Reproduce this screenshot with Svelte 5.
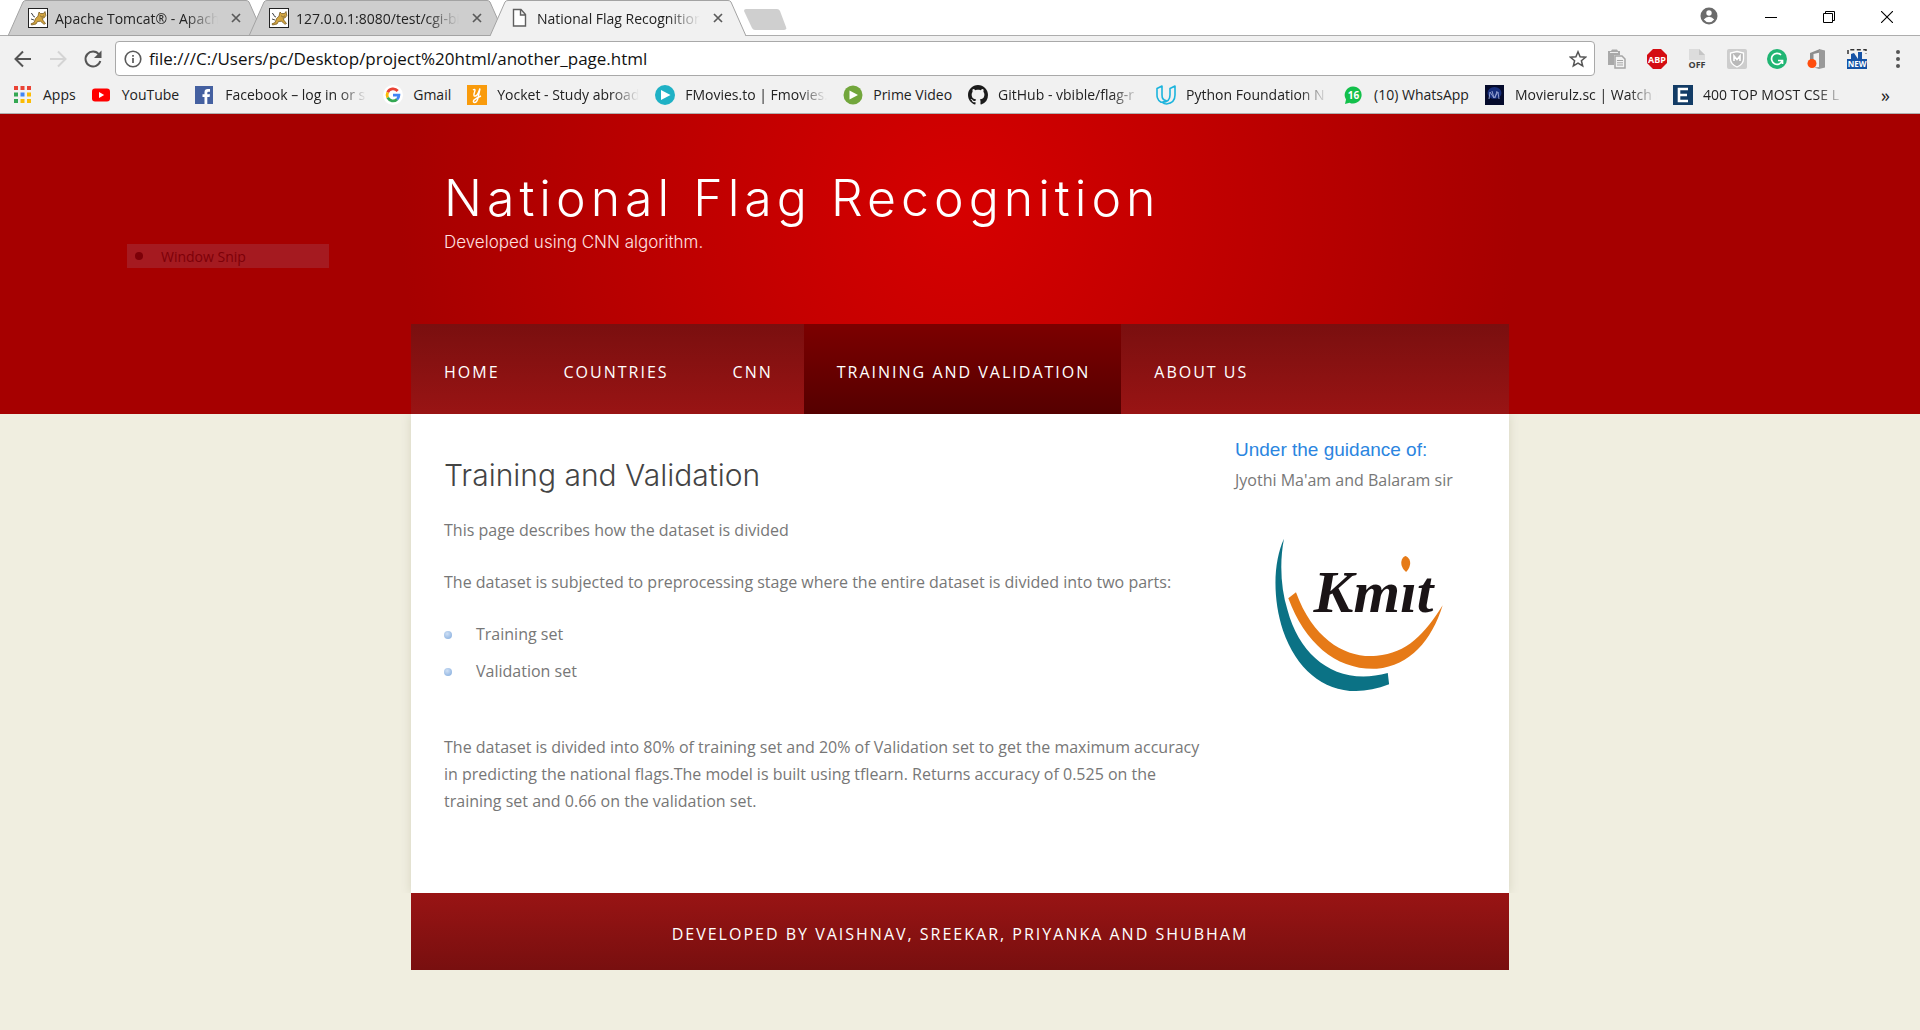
<script>
  const tabs = [
    { title: 'Apache Tomcat® - Apache', icon: 'cat', active: false },
    { title: '127.0.0.1:8080/test/cgi-bin', icon: 'cat', active: false },
    { title: 'National Flag Recognition', icon: 'page', active: true }
  ];
  const bookmarks = [
    { label: 'Apps', icon: 'apps' },
    { label: 'YouTube', icon: 'youtube' },
    { label: 'Facebook – log in or s', icon: 'facebook' },
    { label: 'Gmail', icon: 'google' },
    { label: 'Yocket - Study abroad', icon: 'yocket' },
    { label: 'FMovies.to | Fmovies.', icon: 'fmovies' },
    { label: 'Prime Video', icon: 'prime' },
    { label: 'GitHub - vbible/flag-r', icon: 'github' },
    { label: 'Python Foundation N', icon: 'udacity' },
    { label: '(10) WhatsApp', icon: 'whatsapp' },
    { label: 'Movierulz.sc | Watch M', icon: 'movierulz' },
    { label: '400 TOP MOST CSE L', icon: 'etop' }
  ];
  const dots = [0, 1, 2].flatMap((r) => [0, 1, 2].map((c) => ({ r, c })));
  const dotColors = ['#ea4335', '#ea4335', '#ea4335', '#34a853', '#4285f4', '#fbbc05', '#34a853', '#fbbc05', '#fbbc05'];
  const menu = ['Home', 'Countries', 'CNN', 'Training and Validation', 'About Us'];
  const current = 'Training and Validation';
  let address = 'file:///C:/Users/pc/Desktop/project%20html/another_page.html';
</script>

<div class="window">
  <div class="tabstrip">
    <div class="tabs">
      {#each tabs as tab}
        <div class="tab" class:active={tab.active}>
          <svg class="shape" viewBox="0 0 256 36" preserveAspectRatio="none" aria-hidden="true">
            <path d="M0 36 L15 2 Q16 .5 18 .5 H238 Q240 .5 241 2 L256 36" />
            {#if !tab.active}<path d="M0 35.5H256" />{/if}
          </svg>
          <div class="tab-body">
            {#if tab.icon === 'cat'}
              <svg class="i20" viewBox="0 0 20 20" aria-hidden="true">
                <rect x=".5" y=".5" width="19" height="19" fill="#fff" stroke="#222" />
                <path d="M11 4l1.500 1.500h3L17 3.500l.8 4-1.600 2.300-2 .5.8 2 2.500 3.200-1.500.8-3.500-3-3 .2-1.500 2.500-4.500 1-.5-1.200 3-1.200 1.500-4 2.500-2.500z" fill="#d2a541" stroke="#6b4d16" stroke-width=".7" />
                <path d="M7 9C4 9 5.500 5 3 5.500M3 11l3 1M12.500 8l1 .8M15.500 8l-1 .8" fill="none" stroke="#333" stroke-width=".9" />
              </svg>
            {:else}
              <svg class="i20" viewBox="0 0 20 20" aria-hidden="true">
                <path d="M3.500 1.500h7.500l4.500 5v11.500h-12zM10.500 1.500V7h5" fill="#fff" stroke="#5f5f5f" stroke-width="1.400" />
              </svg>
            {/if}
            <span class="tab-title">{tab.title}</span>
            <button class="close" aria-label="Close tab">
              <svg viewBox="0 0 10 10" width="10" height="10"><path d="M1 1l8 8M9 1l-8 8" stroke="#5a5a5a" stroke-width="1.700" /></svg>
            </button>
          </div>
        </div>
      {/each}
      <button class="newtab" aria-label="New tab">
        <svg viewBox="0 0 43 21" width="43" height="21"><path d="M2 0H33Q35 0 36 2L42 18Q43 21 40 21H11Q9 21 8 19L0 2Q0 0 2 0Z" fill="#cfcfcf" /></svg>
      </button>
    </div>
    <div class="wincontrols">
      <button class="profile" aria-label="Profile">
        <svg viewBox="0 0 18 18" width="18" height="18"><circle cx="9" cy="9" r="8.500" fill="#6b6b6b" /><circle cx="9" cy="6" r="2.700" fill="#fff" /><path d="M3.800 12.500Q6 9.800 9 9.800t5.200 2.700Q12 15.300 9 15.300t-5.200-2.800z" fill="#fff" /></svg>
      </button>
      <button aria-label="Minimize"><svg viewBox="0 0 12 12" width="12" height="12"><path d="M0 6.500H12" stroke="#000" /></svg></button>
      <button aria-label="Restore"><svg viewBox="0 0 12 12" width="12" height="12"><path d="M.5 2.500h9v9h-9zM2.500 2V.5h9v9H10" fill="none" stroke="#000" /></svg></button>
      <button aria-label="Close window"><svg viewBox="0 0 12 12" width="12" height="12"><path d="M0 0L12 12M12 0L0 12" stroke="#000" stroke-width="1.100" /></svg></button>
    </div>
  </div>

  <div class="toolbar">
    <div class="navbuttons">
      <button aria-label="Back"><svg class="i20" viewBox="0 0 20 20"><path d="M18 10H3M10 2.500L2.500 10l7.500 7.500" fill="none" stroke="#555" stroke-width="2" /></svg></button>
      <button aria-label="Forward" disabled><svg class="i20" viewBox="0 0 20 20"><path d="M2 10H17M10 2.500L17.500 10 10 17.500" fill="none" stroke="#d4d4d4" stroke-width="2" /></svg></button>
      <button aria-label="Reload"><svg class="i20" viewBox="0 0 20 20"><path d="M16 5.500A7.500 7.500 0 1 0 17.300 12" fill="none" stroke="#555" stroke-width="2" /><path d="M18.500 1.500V9H11z" fill="#555" /></svg></button>
    </div>
    <div class="omnibox">
      <svg viewBox="0 0 18 18" width="18" height="18" aria-hidden="true"><circle cx="9" cy="9" r="7.800" fill="none" stroke="#5a5a5a" stroke-width="1.600" /><path d="M9 8v5M9 5v1.700" stroke="#5a5a5a" stroke-width="1.700" /></svg>
      <input type="text" aria-label="Address" bind:value={address} />
      <button aria-label="Bookmark this page"><svg viewBox="0 0 18 18" width="18" height="18"><path d="M9 1.800l2.100 5 5.400.4-4.100 3.500 1.300 5.300L9 13.200 4.300 16l1.300-5.300L1.500 7.200l5.400-.4z" fill="none" stroke="#555" stroke-width="1.500" /></svg></button>
    </div>
    <div class="extensions">
      <button aria-label="Copy pages"><svg class="i20" viewBox="0 0 20 20"><path d="M1 2h3l1-1.500h5l1 1.500h2v4H7v10H1z" fill="#a9a9a9" /><path d="M3 3.500h8" stroke="#eee" /><path d="M8 7h7l3 3v9H8z" fill="#f2f2f2" stroke="#a5a5a5" stroke-width="1.500" /><path d="M10 11.500h6M10 13.800h6M10 16h6" stroke="#a5a5a5" /></svg></button>
      <button aria-label="Adblock Plus"><svg class="i20" viewBox="0 0 20 20"><path d="M6 0h8l6 6v8l-6 6H6l-6-6V6z" fill="#d40d12" /><text x="10" y="13.500" text-anchor="middle" font-size="9" font-weight="700" fill="#fff">ABP</text></svg></button>
      <button aria-label="Off"><svg class="i20" viewBox="0 0 20 20"><path d="M2 0h10l6 6v5H2z" fill="#dcdcdc" /><path d="M12 0v6h6" fill="#c5c5c5" /><text x="10" y="18.500" text-anchor="middle" font-size="9" font-weight="700" fill="#3d3d3d">OFF</text></svg></button>
      <button aria-label="McAfee"><svg class="i20" viewBox="0 0 20 20"><rect width="20" height="20" rx="2" fill="#cdcdcd" /><path d="M10 2.500l6.500 1.500v6q0 5-6.500 8-6.500-3-6.500-8V4z" fill="#b9b9b9" stroke="#fff" stroke-width="1.300" /><path d="M7 12V7l3 3.500L13 7v5" fill="none" stroke="#fff" stroke-width="1.600" /></svg></button>
      <button aria-label="Grammarly"><svg class="i20" viewBox="0 0 20 20"><circle cx="10" cy="10" r="10" fill="#20b573" /><path d="M14 6A5.500 5.500 0 1 0 15.300 11.500M11 11.500h4.500V15" fill="none" stroke="#fff" stroke-width="1.700" /></svg></button>
      <button aria-label="Office"><svg class="i20" viewBox="0 0 20 20"><path d="M3 4l10-4v3.500L6.500 5v6H3z" fill="#8d8d8d" /><path d="M12 0l6 1.500v17L12 20l-5-1.500 5-.5z" fill="#999" /><circle cx="5" cy="14.500" r="4.500" fill="#ff4d0d" /></svg></button>
      <button aria-label="New snip"><svg class="i20" viewBox="0 0 20 20"><path d="M1 5V.8h18V5" fill="none" stroke="#333" stroke-width="1.500" stroke-dasharray="4 2.500" /><path d="M0 10h4V5l3-1 4 6V3h4v7h5v10H0z" fill="#1552a5" /><text x="10" y="18" text-anchor="middle" font-size="8" font-weight="700" fill="#fff">NEW</text></svg></button>
      <button class="more" aria-label="Menu"><svg viewBox="0 0 4 18" width="4" height="18"><circle cx="2" cy="2" r="2" fill="#555" /><circle cx="2" cy="9" r="2" fill="#555" /><circle cx="2" cy="16" r="2" fill="#555" /></svg></button>
    </div>
  </div>

  <nav class="bookmarks" aria-label="Bookmarks">
    {#each bookmarks as b}
      <a href="#top">
        <svg class="i20" viewBox="0 0 20 20" aria-hidden="true">
          {#if b.icon === 'apps'}
            {#each dots as d, i}<rect x={1 + d.c * 6.500} y={1 + d.r * 6.500} width="4" height="4" fill={dotColors[i]} />{/each}
          {:else if b.icon === 'youtube'}
            <rect x="0" y="3.500" width="18" height="13" rx="3" fill="#f00" /><path d="M7 7l5.200 3L7 13z" fill="#fff" />
          {:else if b.icon === 'facebook'}
            <rect x="0" y="1" width="18" height="18" fill="#4460a0" /><path d="M9.500 19v-7H7.500V9.200h2V7.300q0-3.300 3.300-3.300H15v2.700h-1.500q-1.200 0-1.200 1.100v1.400H15l-.4 2.800h-2.300v7z" fill="#fff" />
          {:else if b.icon === 'google'}
            <circle cx="10" cy="10" r="10" fill="#fff" />
            <g fill="none" stroke-width="2.800"><path d="M14.700 6A6 6 0 0 0 4.700 7.300" stroke="#ea4335" /><path d="M4.700 7.300a6 6 0 0 0 0 5.400" stroke="#fbbc05" /><path d="M4.700 12.700a6 6 0 0 0 9.300 1.700" stroke="#34a853" /><path d="M14 14.400A6 6 0 0 0 15.900 10.200H10" stroke="#4285f4" /></g>
          {:else if b.icon === 'yocket'}
            <rect width="20" height="20" fill="#f99b0c" /><path d="M6 5q2-1.500 2 .5L7 9q-.5 2.500 1.500 2 2-.5 3.500-5l1-2.500L11 13q-1 4.500-3.500 4.500-2-.5-.5-2.500 2-2 7-4" fill="none" stroke="#fff" stroke-width="1.400" />
          {:else if b.icon === 'fmovies'}
            <circle cx="10" cy="10" r="10" fill="#1fb1c5" /><path d="M6 5l9.500 5L6 15z" fill="#fff" />
          {:else if b.icon === 'prime'}
            <circle cx="10" cy="10" r="9.500" fill="#72a63c" /><path d="M6.500 5.500L15 10l-8.500 4.500z" fill="#fff" />
          {:else if b.icon === 'github'}
            <path transform="scale(1.25)" d="M8 0C3.580 0 0 3.580 0 8c0 3.540 2.290 6.530 5.470 7.590.4.070.55-.17.55-.38 0-.19-.01-.82-.01-1.490-2.010.37-2.530-.49-2.690-.94-.09-.23-.48-.94-.82-1.130-.28-.15-.68-.52-.01-.53.63-.01 1.080.58 1.230.82.72 1.210 1.870.87 2.330.66.07-.52.28-.87.51-1.070-1.780-.2-3.640-.89-3.640-3.950 0-.87.31-1.590.82-2.150-.08-.2-.36-1.020.08-2.120 0 0 .67-.21 2.200.82.64-.18 1.320-.27 2-.27s1.360.09 2 .27c1.530-1.040 2.200-.82 2.200-.82.44 1.100.16 1.920.08 2.120.51.56.82 1.270.82 2.150 0 3.070-1.870 3.750-3.650 3.950.29.25.54.73.54 1.480 0 1.070-.01 1.930-.01 2.200 0 .21.15.46.55.38A8.010 8.010 0 0 0 16 8c0-4.420-3.580-8-8-8z" fill="#1b1b1b" />
          {:else if b.icon === 'udacity'}
            <path d="M1 3.500L6 1v9q0 5 4 5.500Q4 20 1.500 13q-.5-1-.5-3zM14 3.500L19 1v9q0 8-8.500 9-2.500 0-4-1.500Q14 17 14 10z" fill="none" stroke="#1cb4dd" stroke-width="1.600" stroke-linejoin="round" />
          {:else if b.icon === 'whatsapp'}
            <path d="M9 1.500a8.500 8.500 0 1 1-3.500 16.200L1 19l1-4.500A8.500 8.500 0 0 1 9 1.500z" fill="#13c04b" /><text x="9.500" y="13.500" text-anchor="middle" font-size="10" font-weight="700" fill="#fff">16</text>
          {:else if b.icon === 'movierulz'}
            <rect width="19" height="20" fill="#050b2c" /><ellipse cx="9.500" cy="8" rx="7" ry="6" fill="#1f3d9c" opacity=".7" /><path d="M4 14l1-7 4 6 4-6 1 7M7 6l2 7M12 6l-2 7" fill="none" stroke="#8f9dcf" stroke-width="1" />
          {:else}
            <rect width="20" height="20" fill="#133c66" /><path d="M15 4H6v12h9M6 10h8" fill="none" stroke="#fff" stroke-width="2.600" />
          {/if}
        </svg>
        <span class:cut={b.label.length > 14}>{b.label}</span>
      </a>
    {/each}
    <button class="overflow" aria-label="More bookmarks">»</button>
  </nav>
</div>

<div class="page" id="top">
  <header>
    <div class="wrap banner">
      <h1>National Flag Recognition</h1>
      <p>Developed using CNN algorithm.</p>
    </div>
    <nav class="wrap menu" aria-label="Site">
      {#each menu as item}
        <a href="#top" class:current={item === current}>{item}</a>
      {/each}
    </nav>
    <div class="snip"><span class="bullet"></span><span>Window Snip</span></div>
  </header>

  <div class="wrap content">
    <main>
      <h2>Training and Validation</h2>
      <p>This page describes how the dataset is divided</p>
      <p>The dataset is subjected to preprocessing stage where the entire dataset is divided into two parts:</p>
      <ul>
        <li>Training set</li>
        <li>Validation set</li>
      </ul>
      <p>The dataset is divided into 80% of training set and 20% of Validation set to get the maximum accuracy<br />in predicting the national flags.The model is built using tflearn. Returns accuracy of 0.525 on the<br />training set and 0.66 on the validation set.</p>
    </main>
    <aside>
      <h3>Under the guidance of:</h3>
      <p>Jyothi Ma'am and Balaram sir</p>
      <svg class="logo" viewBox="270 370 530 490" role="img" aria-label="Kmit logo">
        <path d="M311 384C298 450 300 530 322 600C360 740 470 830 623 788L627 822C480 880 360 810 308 660C275 560 280 450 311 384Z" fill="#0b7285" />
        <path d="M324 563L347 545C400 690 500 745 590 736C680 728 735 670 788 584C755 690 690 765 590 775C470 780 375 700 324 563Z" fill="#e67a17" />
        <text x="400" y="606" font-size="180" fill="#1a1416">Kmit</text>
        <circle class="mask" cx="694" cy="488" r="25" />
        <path d="M676 436C686 440 692 450 690 462C688 474 682 480 678 484C668 476 662 464 664 452C666 442 670 438 676 436Z" fill="#e67a17" />
      </svg>
    </aside>
  </div>

  <footer class="wrap">Developed by Vaishnav, Sreekar, Priyanka and Shubham</footer>
</div>

<style>
  :global(body) { background: #f0eee0; }
  :global(#app) { min-height: 100vh; }
  button { border: 0; padding: 0; background: none; display: flex; align-items: center; justify-content: center; font: inherit; color: inherit; }
  a { color: inherit; text-decoration: none; }
  svg { display: block; flex: none; }
  svg text { font-family: "Open Sans", sans-serif; }
  .i20 { width: 20px; height: 20px; }

  .window { background: #f1f1f1; font-family: "Open Sans", sans-serif; font-size: 14px; color: #222; border-bottom: 1px solid #b0b0b0; }
  .tabstrip { display: flex; justify-content: space-between; height: 36px; background: linear-gradient(#fff 35px, #adadad 35px); }
  .tabs { display: flex; padding-left: 8px; }
  .tab { display: grid; grid-template-columns: minmax(0, 1fr); flex: none; width: 256px; height: 36px; margin-right: -15px; }
  .tab.active { z-index: 1; margin-right: -2px; }
  .shape { grid-area: 1 / 1; width: 100%; height: 36px; fill: #cecece; stroke: #a3a3a3; }
  .active .shape { fill: #f1f1f1; }
  .tab-body { grid-area: 1 / 1; display: flex; align-items: center; gap: 7px; padding: 0 21px 0 20px; z-index: 1; }
  .tab-title { flex: 1; min-width: 0; overflow: hidden; white-space: nowrap; mask-image: linear-gradient(90deg, #000 80%, transparent); }
  .close { width: 14px; height: 20px; margin: 0 0 0 4px; }
  .newtab { align-self: flex-start; padding-top: 9px; }
  .wincontrols { display: flex; height: 34px; padding-right: 4px; }
  .wincontrols button { width: 58px; }
  .wincontrols .profile { margin-right: 4px; padding-bottom: 3px; }

  .toolbar { display: flex; align-items: center; padding: 5px 20px 0 13px; }
  .navbuttons { display: flex; gap: 15px; }
  .omnibox { flex: 1; display: flex; align-items: center; gap: 7px; height: 35px; box-sizing: border-box; margin-left: 12px; padding: 0 7px 0 8px; background: #fff; border: 1px solid #a9a9a9; border-radius: 4px; }
  .omnibox input { flex: 1; border: 0; outline: 0; padding: 0; background: none; font: 17px "Open Sans", sans-serif; color: #111; }
  .extensions { display: flex; align-items: center; gap: 20px; margin-left: 12px; }
  .more { width: 4px; margin-left: 9px; }

  .bookmarks { display: flex; align-items: center; gap: 16px; height: 37px; padding: 0 30px 0 13px; }
  .bookmarks a { display: flex; align-items: center; gap: 10px; white-space: nowrap; }
  .bookmarks .cut { width: 142px; overflow: hidden; mask-image: linear-gradient(90deg, #000 80%, transparent); }
  .overflow { margin-left: auto; font-size: 18px; }

  .page { font-family: "Open Sans", sans-serif; font-size: 16px; line-height: 27px; color: #777; }
  .wrap { width: 1098px; max-width: 100%; margin: 0 auto; box-sizing: border-box; }
  header { position: relative; background: radial-gradient(circle 560px at 50% 96px, #d60000, #a60000); }
  .banner { padding: 54px 33px 0; height: 210px; color: #fff; font-family: "Inter", sans-serif; }
  h1 { margin: 0; font-size: 50px; line-height: 60px; font-weight: 300; letter-spacing: 5px; }
  .banner p { margin: 0; font-size: 17px; line-height: 28px; font-weight: 300; color: #ffe0e0; }
  .menu { display: flex; background: linear-gradient(#7a0f0f, #991414); height: 90px; }
  .menu a { display: flex; align-items: center; padding: 6px 31px 0 33px; color: #fff; font: 500 16px "Open Sans", sans-serif; letter-spacing: 2px; text-transform: uppercase; }
  .menu .current { background: linear-gradient(#7c0000, #550000); }
  .snip { position: absolute; left: 127px; top: 130px; width: 202px; height: 24px; box-sizing: border-box; display: flex; align-items: center; gap: 18px; padding-left: 8px; background: #a51a20; color: #7d0008; font: 14px "Open Sans", sans-serif; }
  .bullet { width: 8px; height: 8px; border-radius: 50%; background: #7d0008; }

  .content { display: flex; justify-content: space-between; min-height: 479px; padding: 22px 33px 0; background: #fff; box-shadow: 0 0 10px #d6d4c0; clip-path: inset(0 -12px); }
  main { width: 740px; padding-top: 20px; }
  h2 { margin: 0 0 23px; font: 300 30px/38px "Inter", sans-serif; color: #444; }
  main p { margin: 0 0 25px; white-space: nowrap; }
  ul { list-style: none; margin: 0 0 49px; padding: 0; }
  li { display: flex; align-items: center; gap: 24px; margin-bottom: 10px; }
  li:last-child { margin-bottom: 0; }
  li::before { content: ""; width: 8px; height: 8px; border-radius: 50%; background: radial-gradient(circle at 40% 35%, #cfe0f5, #7fa9dc); }
  aside { width: 241px; }
  h3 { margin: 0; font: 19px/28px "Liberation Sans", sans-serif; color: #2b85e0; }
  aside p { margin: 3px 0 0; }
  .logo { width: 177px; height: 163px; margin: 40px 0 0 35px; }
  .logo text { font-family: "Liberation Serif", serif; font-weight: 700; font-style: italic; }
  .mask { fill: #fff; }

  footer { display: flex; align-items: center; justify-content: center; padding: 28px 0 22px; background: linear-gradient(#991414, #780f0f); color: #fff; font: 500 16px/27px "Open Sans", sans-serif; letter-spacing: 2px; text-transform: uppercase; }
</style>
